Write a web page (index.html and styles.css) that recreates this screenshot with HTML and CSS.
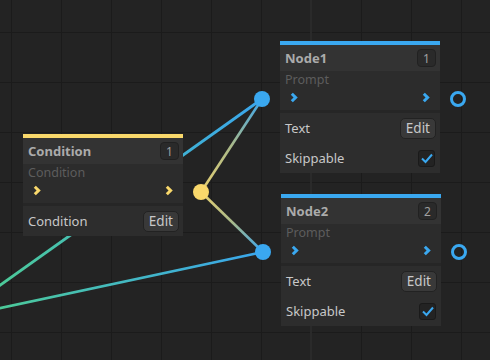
FILE: index.html
```html
<!DOCTYPE html>
<html lang="en">

<head>
    <meta charset="UTF-8">
    <title>Dialogue Graph</title>
    <link rel="stylesheet" href="styles.css">
</head>

<body>
    <div class="canvas">
        <!-- connections -->
        <svg class="wires" width="490" height="360" viewBox="0 0 490 360">
            <defs>
                <linearGradient id="g-a" gradientUnits="userSpaceOnUse" x1="-46" y1="318" x2="262" y2="99">
                    <stop offset="0" stop-color="#4fd08a" />
                    <stop offset="1" stop-color="#3aa6ee" />
                </linearGradient>
                <linearGradient id="g-b" gradientUnits="userSpaceOnUse" x1="-46" y1="318" x2="263" y2="252">
                    <stop offset="0" stop-color="#4fd08a" />
                    <stop offset="1" stop-color="#3aa6ee" />
                </linearGradient>
                <linearGradient id="g-c" gradientUnits="userSpaceOnUse" x1="201" y1="192" x2="262" y2="99">
                    <stop offset="0" stop-color="#e8d070" />
                    <stop offset="0.5" stop-color="#a9b98a" />
                    <stop offset="1" stop-color="#3aa6ee" />
                </linearGradient>
                <linearGradient id="g-d" gradientUnits="userSpaceOnUse" x1="201" y1="192" x2="263" y2="252">
                    <stop offset="0" stop-color="#e8d070" />
                    <stop offset="0.5" stop-color="#a9b98a" />
                    <stop offset="1" stop-color="#3aa6ee" />
                </linearGradient>
            </defs>
            <line x1="-46" y1="318" x2="262" y2="99" stroke="url(#g-a)" stroke-width="2.8" />
            <line x1="-46" y1="318" x2="263" y2="252" stroke="url(#g-b)" stroke-width="2.8" />
            <line x1="201" y1="192" x2="262" y2="99" stroke="url(#g-c)" stroke-width="2.6" />
            <line x1="201" y1="192" x2="263" y2="252" stroke="url(#g-d)" stroke-width="2.6" />
        </svg>

        <!-- condition node -->
        <div class="node node-cond">
            <div class="node-head">
                <span class="node-title">Condition</span>
                <span class="badge">1</span>
            </div>
            <div class="node-pins">
                <div class="pins-label">Condition</div>
                <div class="pins-arrows">
                    <svg class="chev" width="8" height="11" viewBox="0 0 8 11"><path d="M1.8 1.8 L5.6 5.5 L1.8 9.2" /></svg>
                    <svg class="chev" width="8" height="11" viewBox="0 0 8 11"><path d="M1.8 1.8 L5.6 5.5 L1.8 9.2" /></svg>
                </div>
            </div>
            <div class="node-row">
                <span>Condition</span>
                <button class="edit-btn">Edit</button>
            </div>
        </div>

        <!-- node 1 -->
        <div class="node node-one">
            <div class="node-head">
                <span class="node-title">Node1</span>
                <span class="badge">1</span>
            </div>
            <div class="node-pins">
                <div class="pins-label">Prompt</div>
                <div class="pins-arrows">
                    <svg class="chev" width="8" height="11" viewBox="0 0 8 11"><path d="M1.8 1.8 L5.6 5.5 L1.8 9.2" /></svg>
                    <svg class="chev" width="8" height="11" viewBox="0 0 8 11"><path d="M1.8 1.8 L5.6 5.5 L1.8 9.2" /></svg>
                </div>
            </div>
            <div class="node-row">
                <span>Text</span>
                <button class="edit-btn">Edit</button>
            </div>
            <div class="node-row">
                <span>Skippable</span>
                <span class="check">
                    <svg width="14" height="14" viewBox="0 0 14 14"><path d="M2 7.5 L5.5 11 L12 3.5" /></svg>
                </span>
            </div>
        </div>

        <!-- node 2 -->
        <div class="node node-two">
            <div class="node-head">
                <span class="node-title">Node2</span>
                <span class="badge">2</span>
            </div>
            <div class="node-pins">
                <div class="pins-label">Prompt</div>
                <div class="pins-arrows">
                    <svg class="chev" width="8" height="11" viewBox="0 0 8 11"><path d="M1.8 1.8 L5.6 5.5 L1.8 9.2" /></svg>
                    <svg class="chev" width="8" height="11" viewBox="0 0 8 11"><path d="M1.8 1.8 L5.6 5.5 L1.8 9.2" /></svg>
                </div>
            </div>
            <div class="node-row">
                <span>Text</span>
                <button class="edit-btn">Edit</button>
            </div>
            <div class="node-row">
                <span>Skippable</span>
                <span class="check">
                    <svg width="14" height="14" viewBox="0 0 14 14"><path d="M2 7.5 L5.5 11 L12 3.5" /></svg>
                </span>
            </div>
        </div>

        <!-- pins -->
        <span class="pin pin-yellow" style="left:201px; top:192px;"></span>
        <span class="pin pin-blue" style="left:262px; top:99px;"></span>
        <span class="pin pin-blue" style="left:263px; top:252px;"></span>
        <span class="pin pin-ring" style="left:458px; top:99px;"></span>
        <span class="pin pin-ring" style="left:459px; top:252px;"></span>
    </div>
</body>

</html>
```

FILE: styles.css
```css
body {
    margin: 0;
    padding: 0;
    background: #232323;
    font-family: 'Noto Sans', 'Open Sans', sans-serif;
}

.canvas {
    position: relative;
    width: 490px;
    height: 360px;
    overflow: hidden;
    background-color: #232323;
    background-image:
        linear-gradient(90deg, transparent 310px, #2a2a2a 310px, #2a2a2a 312px, transparent 312px),
        linear-gradient(90deg, #1b1b1b 1px, transparent 1px),
        linear-gradient(0deg, #1b1b1b 1px, transparent 1px);
    background-size: 490px 360px, 50px 50px, 50px 50px;
    background-position: 0 0, 11px 0, 0 33px;
}

.wires {
    position: absolute;
    left: 0;
    top: 0;
}

.node {
    position: absolute;
    width: 160px;
    background: #2d2d2d;
    border-top: 4px solid #3aa8f0;
    color: #c8c8c8;
    font-size: 13px;
}

.node-cond {
    left: 23px;
    top: 134px;
    border-top-color: #f9d86b;
}

.node-one {
    left: 280px;
    top: 41px;
}

.node-two {
    left: 281px;
    top: 194px;
}

.node-head {
    height: 26px;
    background: #333;
    display: flex;
    align-items: center;
    justify-content: space-between;
    padding: 0 4px 0 5px;
}

.node-title {
    font-weight: bold;
    color: #ababab;
    font-size: 13px;
}

.badge {
    width: 17px;
    height: 16px;
    border: 1px solid #212121;
    border-radius: 4px;
    background: #2a2a2a;
    color: #a0a0a0;
    font-size: 12px;
    display: flex;
    align-items: center;
    justify-content: center;
}

.node-pins {
    height: 39px;
    background: #2c2c2c;
    border-bottom: 3px solid #262626;
    padding: 0 10px 0 5px;
}

.pins-label {
    color: #5d5d5d;
    font-size: 12.5px;
    line-height: 16px;
    padding-top: 1px;
}

.pins-arrows {
    display: flex;
    justify-content: space-between;
    padding: 4px 0 0 5px;
}

.chev path {
    fill: none;
    stroke: #3aa8f0;
    stroke-width: 3;
}

.node-cond .chev path {
    stroke: #f9d86b;
}

.node-row {
    height: 30px;
    display: flex;
    align-items: center;
    justify-content: space-between;
    padding: 0 4px 0 5px;
}

.edit-btn {
    height: 21px;
    padding: 0 5px;
    background: #393939;
    border: 1px solid #222;
    border-radius: 5px;
    color: #c8c8c8;
    font-family: 'Noto Sans', 'Open Sans', sans-serif;
    font-size: 13.5px;
    line-height: 18px;
}

.check {
    width: 15px;
    height: 15px;
    margin-right: 1px;
    background: #232323;
    border: 1px solid #1a1a1a;
    border-radius: 3px;
    display: flex;
    align-items: center;
    justify-content: center;
}

.check path {
    fill: none;
    stroke: #3aa8f0;
    stroke-width: 2;
}

.pin {
    position: absolute;
    width: 16px;
    height: 16px;
    margin: -8px 0 0 -8px;
    border-radius: 50%;
    box-sizing: border-box;
}

.pin-blue {
    background: #3aa8f0;
}

.pin-yellow {
    background: #f9d86b;
}

.pin-ring {
    width: 16px;
    height: 16px;
    margin: -8px 0 0 -8px;
    border: 3px solid #3aa8f0;
}
```
